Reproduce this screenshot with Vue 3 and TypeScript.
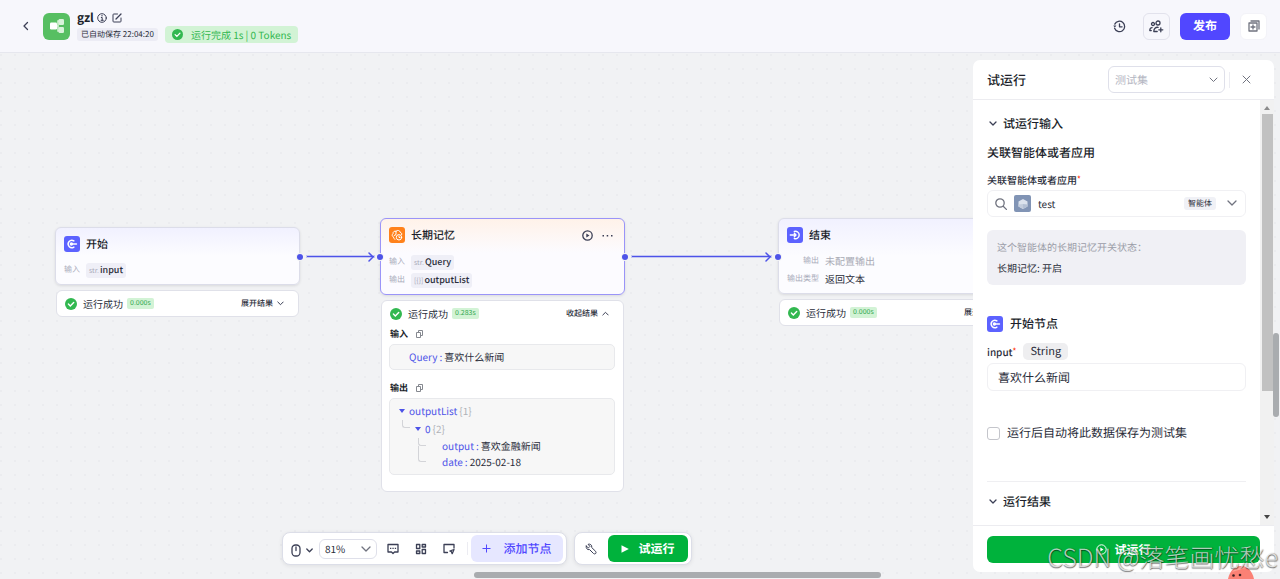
<script setup lang="ts">
import { ref } from 'vue'

interface Param { label: string; type?: string; value: string; muted?: boolean; plain?: boolean }
interface FlowNode {
  id: string
  title: string
  icon: 'start' | 'memory' | 'end'
  params: Param[]
  time: string
  open: boolean
}

const nodes = ref<FlowNode[]>([
  { id: 'start', title: '开始', icon: 'start', time: '0.000s', open: false,
    params: [{ label: '输入', type: 'str.', value: 'input' }] },
  { id: 'memory', title: '长期记忆', icon: 'memory', time: '0.283s', open: true,
    params: [{ label: '输入', type: 'str.', value: 'Query' }, { label: '输出', type: '[{}]', value: 'outputList' }] },
  { id: 'end', title: '结束', icon: 'end', time: '0.000s', open: false,
    params: [{ label: '输出', value: '未配置输出', muted: true, plain: true }, { label: '输出类型', value: '返回文本', plain: true }] },
])

const inputText = ref('喜欢什么新闻')
const saveAsSet = ref(false)
</script>

<template>
  <div class="page">
    <header class="topbar">
      <button class="bare back" aria-label="返回">
        <svg width="8" height="10" viewBox="0 0 8 10"><path d="M5.5 1.5 2 5l3.500 3.500" class="ln" /></svg>
      </button>
      <div class="logo">
        <svg width="26" height="26" viewBox="0 0 26 26">
          <path d="M11 13h3V8h4M14 13v5h4" fill="none" stroke="#d9f2da" stroke-width="1.500" />
          <rect x="6" y="9.500" width="7" height="7" rx="1.200" fill="#fff" />
          <rect x="14.500" y="6" width="5.500" height="6" rx="1.200" fill="#d9f2da" />
          <rect x="14.500" y="14" width="5.500" height="6" rx="1.200" fill="#d9f2da" />
        </svg>
      </div>
      <div class="heading">
        <div class="name-row">
          <h1>gzl</h1>
          <svg width="10" height="10" viewBox="0 0 10 10"><circle cx="5" cy="5" r="4.300" class="thin" /><path d="M4.300 4.500H5.200V7.200M4.100 7.300h2.200" class="thin" /><circle cx="5" cy="2.700" r=".7" fill="#3b3f55" /></svg>
          <button class="bare" aria-label="编辑">
            <svg width="10" height="10" viewBox="0 0 10 10"><path d="M5.500 1H1.800Q1 1 1 1.800v6.400q0 .8.800.8h6.400q.8 0 .8-.8V5" class="thin" /><path d="M4 6 9 1" class="ln" /></svg>
          </button>
        </div>
        <div class="state-row">
          <span class="saved">已自动保存 22:04:20</span>
          <span class="done">
            <svg width="11" height="11" viewBox="0 0 12 12"><circle cx="6" cy="6" r="6" fill="#32b850" /><path d="m3.400 6.100 1.900 1.900 3.400-3.500" class="check" /></svg>
            运行完成 1s | 0 Tokens
          </span>
        </div>
      </div>
      <div class="top-actions">
        <button class="bare" aria-label="历史">
          <svg width="13" height="13" viewBox="0 0 13 13"><path d="M1.800 4.100A5.200 5.200 0 1 1 1.600 8.300" class="ln" /><path d="M.3 5.600h3.100L1.800 7.700Z" fill="#3b3f55" /><path d="M6.500 3.800v3h2.600" class="ln" /></svg>
        </button>
        <button class="square" aria-label="协作">
          <svg width="15" height="13" viewBox="0 0 15 13"><circle cx="4" cy="4" r="1.500" class="ln" /><circle cx="9" cy="3" r="2" class="ln" /><path d="M.8 10.600c0-2.100 1-3 2.300-3M4.800 11.500c0-3 1.800-4.500 4.300-4.200M4.800 11.500h3.400M.8 10.600h1.500M11.800 7.800v4M9.800 9.800h4" class="ln" /></svg>
        </button>
        <button class="publish">发布</button>
        <button class="square solid" aria-label="复制">
          <svg width="12" height="12" viewBox="0 0 12 12"><path d="M1 3h8v8H1ZM3 1h8v8M5 5v4M3 7h4" class="ln grey" /></svg>
        </button>
      </div>
    </header>

    <main class="canvas">
      <div class="wire w1"><svg width="7" height="10" viewBox="0 0 7 10"><path d="m2 1 4 4-4 4" class="wire-head" /></svg></div>
      <div class="wire w2"><svg width="7" height="10" viewBox="0 0 7 10"><path d="m2 1 4 4-4 4" class="wire-head" /></svg></div>

      <section v-for="n in nodes" :key="n.id" class="node" :class="n.id">
        <div class="card">
          <i v-if="n.icon !== 'start'" class="port in"></i>
          <i v-if="n.icon !== 'end'" class="port out"></i>
          <div class="card-head">
            <span class="node-icon" :class="n.icon">
              <svg v-if="n.icon === 'start'" width="16" height="16" viewBox="0 0 16 16"><path d="M9.900 4.900A3.700 3.700 0 1 0 9.900 11.100" class="wh" /><circle cx="7.400" cy="8" r="1.700" fill="#fff" /><path d="M7 8h5.500" class="wh" /></svg>
              <svg v-else-if="n.icon === 'end'" width="16" height="16" viewBox="0 0 16 16"><path d="M7.300 4.500a3.700 3.700 0 1 1 0 7" class="wh" /><path d="M3.300 8h5.200M7.300 6.200 9 8l-1.700 1.800" class="wh" /></svg>
              <svg v-else width="16" height="16" viewBox="0 0 16 16"><path d="M6 12.200C4.800 12 4.400 11 4.600 10 3 9.600 2.700 7.600 4 6.700 3.800 4.700 5.600 3.700 7 4.300 8.400 2.800 11 3.400 11.200 5.300 12.500 5.600 13 6.600 12.700 7.600M7 4.300v3.200l-1.800 1" class="wh fine" /><circle cx="10" cy="10.300" r="2.700" class="wh fine" /><path d="M10 9v1.500h1" class="wh fine" /></svg>
            </span>
            <h2>{{ n.title }}</h2>
            <template v-if="n.icon === 'memory'">
              <button class="bare push" aria-label="运行节点"><svg width="11" height="11" viewBox="0 0 11 11"><circle cx="5.500" cy="5.500" r="4.700" class="ln" /><path d="m4.300 3.500 3.200 2-3.200 2Z" fill="#3b3f55" /></svg></button>
              <button class="bare" aria-label="更多"><svg width="11" height="3" viewBox="0 0 11 3"><path d="M.5 1h1.500v1.500H.5ZM4.700 1h1.500v1.500H4.700ZM9 1h1.500v1.500H9Z" fill="#3b3f55" /></svg></button>
            </template>
          </div>
          <dl>
            <div v-for="p in n.params" :key="p.label" class="param">
              <dt>{{ p.label }}</dt>
              <dd :class="{ plain: p.plain, muted: p.muted }"><small v-if="p.type">{{ p.type }}</small>{{ p.value }}</dd>
            </div>
          </dl>
        </div>
        <div class="result">
          <div class="result-head">
            <svg width="12" height="12" viewBox="0 0 12 12"><circle cx="6" cy="6" r="6" fill="#32b850" /><path d="m3.400 6.100 1.900 1.900 3.400-3.500" class="check" /></svg>
            <span>运行成功</span>
            <span class="time">{{ n.time }}</span>
            <button class="bare toggle push">{{ n.open ? '收起结果' : '展开结果' }}<svg width="7" height="5" viewBox="0 0 7 5"><path :d="n.open ? 'M.8 4 3.500 1.300 6.200 4' : 'M.8 1 3.500 3.700 6.200 1'" class="thin" /></svg></button>
          </div>
          <div v-if="n.open" class="detail">
            <h3>输入<svg width="7" height="8" viewBox="0 0 7 8"><path d="M.5 2.500h4v5h-4ZM2.500 2.500v-2h4v5h-2" class="copy" /></svg></h3>
            <div class="box single"><b>Query</b><b>:</b><span>喜欢什么新闻</span></div>
            <h3 class="second">输出<svg width="7" height="8" viewBox="0 0 7 8"><path d="M.5 2.500h4v5h-4ZM2.500 2.500v-2h4v5h-2" class="copy" /></svg></h3>
            <div class="box tree">
              <div class="leaf l0"><svg width="6" height="4" viewBox="0 0 6 4"><path d="M0 0h6L3 4Z" fill="#4d53e8" /></svg><b>outputList</b><em>{1}</em></div>
              <div class="leaf l1"><i class="elbow"></i><svg width="6" height="4" viewBox="0 0 6 4"><path d="M0 0h6L3 4Z" fill="#4d53e8" /></svg><b>0</b><em>{2}</em></div>
              <div class="leaf l2"><i class="elbow"></i><b>output</b><b>:</b><span>喜欢金融新闻</span></div>
              <div class="leaf l2"><i class="elbow"></i><b>date</b><b>:</b><span>2025-02-18</span></div>
            </div>
          </div>
        </div>
      </section>

      <div class="toolbars">
        <div class="toolbar">
          <button class="bare mouse" aria-label="鼠标模式">
            <svg width="10" height="13" viewBox="0 0 10 13"><rect x="1" y="1" width="8" height="11" rx="3.500" class="ln" /><path d="M5 3v3.500" class="ln" /></svg>
            <svg width="7" height="5" viewBox="0 0 7 5"><path d="M.8 1 3.500 3.700 6.200 1" class="ln" /></svg>
          </button>
          <span class="drop zoom">
            <select aria-label="缩放"><option>81%</option></select>
            <svg width="10" height="6" viewBox="0 0 10 6"><path d="M1 1l4 4 4-4" class="ln grey" /></svg>
          </span>
          <button class="bare tool" aria-label="注释"><svg width="12" height="12" viewBox="0 0 12 12"><path d="M1 1.500h10v7.500H7.500L6 10.500 4.500 9H1Z" class="ln" /><path d="M3 4.700h1.300V6H3ZM5.400 4.700h1.300V6H5.400ZM7.800 4.700h1.300V6H7.800Z" fill="#3b3f55" /></svg></button>
          <button class="bare tool" aria-label="整理"><svg width="12" height="12" viewBox="0 0 12 12"><path d="M1.500 1.500h3.300v4H1.500ZM7.200 1.500h3.300V4H7.200ZM1.500 8h3.300v2.500H1.500ZM7.200 6.500h3.300v4H7.200Z" class="ln" /></svg></button>
          <button class="bare tool" aria-label="缩略图"><svg width="12" height="12" viewBox="0 0 12 12"><path d="M4.500 9.500H1v-8h10v3.500" class="ln" /><path d="m6.800 8 4.200-1.500-1.800 4.200-.8-2Z" class="ln" /></svg></button>
          <i class="rule"></i>
          <button class="add"><svg width="9" height="9" viewBox="0 0 9 9"><path d="M4.500.5v8M.5 4.500h8" class="plus" /></svg>添加节点</button>
        </div>
        <div class="toolbar">
          <button class="bare debug" aria-label="调试"><svg width="12" height="12" viewBox="0 0 12 12"><path d="M1.200 3.100 3.400 4.900 4.900 3.400 3.100 1.300C5 .6 7.300 2 6.700 4.500L10.600 8.300Q11.500 9.500 10.700 10.500 9.600 11.400 8.500 10.500L4.600 6.600C2.300 7.200.6 5 1.200 3.100Z" class="thin" /></svg></button>
          <button class="run"><svg width="8" height="8" viewBox="0 0 8 8"><path d="M.5.3 7.800 4 .5 7.700Z" fill="#fff" /></svg>试运行</button>
        </div>
      </div>
      <i class="hbar"></i>
      <i class="vbar"></i>

      <aside class="panel">
        <div class="panel-head">
          <h2>试运行</h2>
          <span class="drop set">
            <select aria-label="测试集"><option>测试集</option></select>
            <svg width="9" height="6" viewBox="0 0 9 6"><path d="M1 1l3.500 3.500L8 1" class="thin grey" /></svg>
          </span>
          <i class="rule"></i>
          <button class="bare" aria-label="关闭"><svg width="9" height="9" viewBox="0 0 9 9"><path d="m1 1 7 7M8 1 1 8" class="thin grey" /></svg></button>
        </div>
        <div class="panel-body">
          <div class="form">
            <button class="bare fold"><svg width="8" height="6" viewBox="0 0 8 6"><path d="M1 1l3 3 3-3" class="ln" /></svg>试运行输入</button>
            <h3>关联智能体或者应用</h3>
            <label for="agent">关联智能体或者应用<sup>*</sup></label>
            <div class="drop agent">
              <svg width="12" height="12" viewBox="0 0 12 12"><circle cx="5" cy="5" r="4.200" class="ln grey" /><path d="m8.200 8.200 3.200 3.200" class="ln grey" /></svg>
              <span class="avatar"><svg width="10" height="10" viewBox="0 0 10 10"><path d="M5 0 9.500 2.500v5L5 10 .5 7.500v-5Z" fill="#dbe2ed" /><path d="M5 5v5L.5 7.500v-2Z" fill="#c3cddd" /><path d="M5 5l4.500.5v2L5 10Z" fill="#b4c0d4" /></svg></span>
              <select id="agent"><option>test</option></select>
              <span class="tag">智能体</span>
              <svg width="10" height="7" viewBox="0 0 10 7"><path d="M1 1l4 4 4-4" class="ln grey" /></svg>
            </div>
            <div class="notice"><p>这个智能体的长期记忆开关状态：</p><p class="strong">长期记忆: 开启</p></div>
            <div class="start-title">
              <span class="node-icon start"><svg width="16" height="16" viewBox="0 0 16 16"><path d="M9.900 4.900A3.700 3.700 0 1 0 9.900 11.100" class="wh" /><circle cx="7.400" cy="8" r="1.700" fill="#fff" /><path d="M7 8h5.500" class="wh" /></svg></span>
              <h3>开始节点</h3>
            </div>
            <div class="field-row"><label for="value">input<sup>*</sup></label><span class="type">String</span></div>
            <input id="value" v-model="inputText" type="text" class="text" />
            <label class="save"><input v-model="saveAsSet" type="checkbox" />运行后自动将此数据保存为测试集</label>
            <div class="output"><button class="bare fold"><svg width="8" height="6" viewBox="0 0 8 6"><path d="M1 1l3 3 3-3" class="ln" /></svg>运行结果</button></div>
          </div>
          <div class="scroll">
            <svg width="6" height="4" viewBox="0 0 6 4"><path d="M3 0l3 4H0Z" fill="#8b8b8b" /></svg>
            <i></i>
            <svg width="6" height="4" viewBox="0 0 6 4"><path d="M0 0h6L3 4Z" fill="#444" /></svg>
          </div>
        </div>
        <div class="panel-foot">
          <button class="submit"><svg width="11" height="11" viewBox="0 0 11 11"><circle cx="5.500" cy="5.500" r="4.700" fill="none" stroke="#fff" /><path d="m4.300 3.500 3.200 2-3.200 2Z" fill="#fff" /></svg>试运行</button>
        </div>
      </aside>

      <svg class="mascot" width="26" height="13" viewBox="0 0 26 13"><path d="M0 13C2 4 7 0 13 0s11 4 13 13Z" fill="#fb8175" /><path d="M4 6C8 1 14 0 18 2 13 3 8 5 4 6Z" fill="#ffa69b" /><circle cx="5.500" cy="9.500" r="1.300" fill="#3d2222" /><circle cx="12" cy="9" r="1.300" fill="#3d2222" /></svg>
      <span class="mark">CSDN @落笔画忧愁e</span>
    </main>
  </div>
</template>

<style>
body { margin: 0; }
</style>

<style scoped>
* { box-sizing: border-box; }
.page {
  height: 100vh; display: flex; flex-direction: column; overflow: hidden;
  font: 10px/16px "Noto Sans CJK SC", sans-serif; color: #2a2d3a; background: #f1f2f4;
  text-rendering: geometricPrecision;
}
h1, h2, h3, p, dl, dd { margin: 0; }
h1, h2, h3 { color: #1c1f2b; }
button, select, input { font: inherit; color: inherit; margin: 0; text-rendering: inherit; }
button { cursor: pointer; border: 0; padding: 0; }
svg { display: block; flex: none; }
.bare { background: none; display: flex; align-items: center; justify-content: center; }
.push { margin-left: auto; }
.ln, .thin { fill: none; stroke: #3b3f55; stroke-width: 1.3; stroke-linecap: round; stroke-linejoin: round; }
.thin { stroke-width: 1; }
.grey { stroke: #70737f; }
.check { fill: none; stroke: #fff; stroke-width: 1.4; stroke-linecap: round; }
.wh { fill: none; stroke: #fff; stroke-width: 1.4; stroke-linecap: round; stroke-linejoin: round; }
.fine { stroke-width: 1; }
.copy { fill: none; stroke: #85888f; stroke-width: 1; }

.topbar { flex: none; height: 53px; display: flex; align-items: center; padding: 0 13px 0 22px; background: #f7f7fc; border-bottom: 1px solid #e6e7ee; }
.logo { width: 27px; height: 27px; border-radius: 6px; background: #57bf62; display: grid; place-items: center; margin: 0 7px 0 13px; }
.name-row { display: flex; align-items: center; gap: 5px; height: 17px; }
.name-row h1 { font-size: 12px; font-weight: 700; margin-right: -2px; }
.state-row { display: flex; align-items: center; gap: 7px; height: 17px; }
.saved { background: #ececf5; border-radius: 3px; padding: 0 4px; line-height: 13px; font-size: 8px; }
.done { display: flex; align-items: center; gap: 8px; background: #d2f3d5; color: #32b850; border-radius: 4px; padding: 0 7px; font-size: 10px; line-height: 17px; }
.top-actions { margin-left: auto; display: flex; align-items: center; gap: 10px; }
.top-actions > .bare { margin-right: 7px; }
.square { width: 27px; height: 27px; border: 1px solid #e2e2ec; border-radius: 6px; background: none; display: grid; place-items: center; }
.solid { background: #fff; border-color: #f3f3f8; }
.publish { width: 50px; height: 27px; border-radius: 6px; background: #5147ff; color: #fff; font-size: 12px; font-weight: 700; }

.canvas { flex: 1; min-height: 0; position: relative; overflow: hidden; background: radial-gradient(circle, #ebecef 1px, transparent 1px) 8px 9px / 14px 14px; }
.node { position: absolute; width: 245px; }
.node.start { left: 55px; top: 174px; }
.node.memory { left: 380px; top: 165px; }
.node.end { left: 778px; top: 165px; }
.card { position: relative; border: 1px solid #dcdde9; border-radius: 6px; padding: 8px 8px 7px; background: linear-gradient(#f1f1ff, #fcfcff 50%); box-shadow: 0 1px 3px #0000001a; }
.memory .card { border-color: #9a94f8; background: linear-gradient(#fff2e9, #fcfbff 45%); }
.card-head { display: flex; align-items: center; gap: 6px; }
.card-head .push { margin-right: 3px; }
.card-head .bare:last-child { margin-right: 3px; }
.node-icon { width: 16px; height: 16px; border-radius: 3px; background: #5c62ff; flex: none; }
.node-icon.memory { background: #ff811a; }
.card h2 { font-size: 11px; font-weight: 500; }
dl { display: grid; gap: 4px; margin-top: 11px; }
.param { display: flex; align-items: center; gap: 6px; height: 14px; }
.memory dl { margin-top: 12px; }
.end dl { margin-top: 11px; }
.end dt { width: 32px; text-align: right; white-space: nowrap; }
dt { font-size: 8px; color: #a9abba; }
dd { font-size: 9px; font-weight: 500; line-height: 14px; background: #efeff7; border-radius: 3px; padding: 0 3px; }
dd small { font-size: 7px; font-weight: 400; color: #a9abba; margin-right: 1px; }
dd.plain { background: none; padding: 0; font-weight: 400; font-size: 10px; }
dd.muted { color: #a9abb5; }
.port { position: absolute; width: 6px; height: 6px; border-radius: 50%; background: #4d53e8; box-shadow: 0 0 0 1px #f2f3f5; top: 26px; }
.memory .port, .end .port { top: 35px; }
.port.in { left: -4px; }
.port.out { right: -4px; }
.wire { position: absolute; top: 203px; height: 1px; background: #4d53e8; box-shadow: 0 0 0 1px #8589ef66; display: flex; align-items: center; justify-content: flex-end; }
.w1 { left: 307px; width: 67px; }
.w2 { left: 632px; width: 139px; }
.wire-head { fill: none; stroke: #4d53e8; stroke-width: 1.5; stroke-linecap: round; }
.result { margin: 5px 1px 0; border: 1px solid #e0e1e9; border-radius: 6px; background: #fff; padding: 0 8px; }
.result-head { display: flex; align-items: center; gap: 6px; height: 25px; }
.toggle { font-size: 8px; font-weight: 500; gap: 4px; margin-right: 6px; }
.time { font-size: 7px; line-height: 11px; color: #32a850; background: #d2f3d5; border-radius: 2px; padding: 0 3px; margin-left: -2px; }
.detail { padding-bottom: 16px; margin-left: -1px; }
.detail h3 { display: flex; align-items: center; gap: 8px; font-size: 9px; font-weight: 700; line-height: 16px; padding-left: 1px; }
.box { border: 1px solid #e8e9ec; border-radius: 5px; background: #f7f7f7; margin-top: 2px; }
.box b { font-weight: 400; color: #4d53e8; margin-right: 2px; }
.single { padding: 4px 19px; }
.detail .second { margin-top: 10px; }
.tree { padding: 3px 9px 4px; }
.leaf { display: flex; align-items: center; line-height: 18px; position: relative; }
.leaf svg { margin-right: 4px; }
.leaf em { font-style: normal; color: #b0b2b8; }
.l1 { padding-left: 16px; }
.l2 { padding-left: 43px; line-height: 16px; }
.elbow { position: absolute; left: 3px; top: 0; width: 8px; height: 8px; border: solid #d3d4d8; border-width: 0 0 1px 1px; border-radius: 0 0 0 3px; }
.l2 .elbow { left: 19px; height: 8px; }
.l2:last-child .elbow { top: -8px; height: 16px; }

.toolbars { position: absolute; left: 282px; bottom: 14px; display: flex; gap: 7px; }
.toolbar { display: flex; align-items: center; height: 33px; background: #fff; border: 1px solid #dcdee8; border-radius: 8px; padding: 0 3px; box-shadow: 0 1px 4px #00000014; }
.mouse { gap: 5px; margin: 3px 6px 0 5px; }
.drop { display: flex; align-items: center; position: relative; border: 1px solid #dfe0ea; border-radius: 6px; background: #fff; }
.drop select { appearance: none; border: 0; background: none; outline: 0; padding: 0; flex: 1; min-width: 0; }
.zoom { width: 58px; height: 20px; padding: 0 5px; margin-right: 10px; }
.tool { margin-right: 16px; }
.rule { width: 1px; height: 16px; background: #ececf2; }
.toolbar .rule { height: 13px; margin: 0 3px 0 -4px; }
.add, .run { display: flex; align-items: center; justify-content: center; height: 27px; border-radius: 6px; font-size: 12px; }
.add { width: 92px; gap: 12px; background: #e6e7ff; color: #5147ff; font-weight: 500; }
.plus { stroke: #5147ff; stroke-width: 1; }
.debug { margin: 0 11px 0 7px; }
.run { width: 80px; gap: 9px; background: #00b23c; color: #fff; font-weight: 700; }
.hbar { position: absolute; left: 474px; width: 407px; bottom: 1px; height: 6px; border-radius: 3px; background: #a9acaf; }
.vbar { position: absolute; right: 1px; top: 280px; height: 84px; width: 6px; border-radius: 3px; background: #a9acaf; z-index: 2; }

.panel { position: absolute; right: 6px; top: 7px; bottom: 7px; width: 301px; background: #fff; border-radius: 7px; display: flex; flex-direction: column; overflow: hidden; }
.panel-head { flex: none; height: 40px; display: flex; align-items: center; padding: 0 23px 0 14px; border-bottom: 1px solid #ececf0; }
.panel-head h2 { font-size: 13px; font-weight: 500; margin-right: auto; }
.set { width: 117px; height: 27px; padding: 0 6px; font-size: 11px; color: #b4b6c2; }
.panel-head .rule { margin: 0 12px 0 4px; }
.panel-body { flex: 1; min-height: 0; display: flex; }
.form { flex: 1; overflow: hidden; padding: 16px 14px 0; }
.fold { font-size: 12px; gap: 6px; padding-left: 2px; font-weight: 500; color: #1c1f2b; }
.form h3 { font-size: 12px; font-weight: 500; }
.fold + h3 { margin-top: 13px; }
.form > label { display: block; margin-top: 11px; font-weight: 500; }
sup { color: #ff441e; font-size: 8px; line-height: 0; vertical-align: 2px; }
.agent { height: 27px; margin-top: 2px; padding: 0 8px 0 7px; gap: 7px; border-color: #f0f0f3; }
.avatar { width: 17px; height: 17px; border-radius: 2px; background: #8194b5; display: grid; place-items: center; }
.tag { font-size: 8px; line-height: 13px; background: #f0f1f6; border-radius: 3px; padding: 0 4px; margin-right: 4px; }
.notice { margin-top: 13px; padding: 6px 10px 7px; border-radius: 6px; background: #f0f0f5; line-height: 21px; color: #9b9da8; }
.notice .strong { color: #2a2d3a; }
.start-title { display: flex; align-items: center; gap: 7px; margin-top: 31px; }
.field-row { display: flex; align-items: center; gap: 7px; margin-top: 11px; }
.field-row label { font-weight: 500; }
.type { background: #eeeef0; border-radius: 5px; padding: 0 7px; font-size: 11px; line-height: 17px; }
.text { display: block; width: 100%; height: 28px; margin-top: 3px; padding: 0 10px; border: 1px solid #f0f0f3; border-radius: 6px; font-size: 12px; background: #fff; outline: 0; }
.form > .save { display: flex; align-items: center; gap: 7px; font-size: 12px; margin-top: 34px; font-weight: 400; }
.save input { appearance: none; width: 13px; height: 13px; border: 1px solid #c4c5cb; border-radius: 3px; background: #fff; }
.output { margin-top: 40px; padding-top: 12px; border-top: 1px solid #efeff2; }
.scroll { width: 14px; background: #f1f1f1; display: flex; flex-direction: column; align-items: center; justify-content: space-between; padding: 6px 0; }
.scroll i { width: 11px; height: 67%; background: #c1c1c1; margin: 4px 0 auto; }
.panel-foot { flex: none; height: 47px; padding: 10px 14px; border-top: 1px solid #ececf0; }
.submit { width: 100%; height: 27px; background: #00b23c; color: #fff; border-radius: 6px; font-size: 12px; font-weight: 700; display: flex; align-items: center; justify-content: center; gap: 7px; }
.mascot { position: absolute; right: 26px; bottom: 0; }
.mark { position: absolute; right: 2px; bottom: 4px; font-size: 25px; line-height: 36px; font-weight: 300; color: #ffffffb0; text-shadow: 0 1px 1px #00000080, 1px 0 1px #00000060; white-space: nowrap; }
</style>
